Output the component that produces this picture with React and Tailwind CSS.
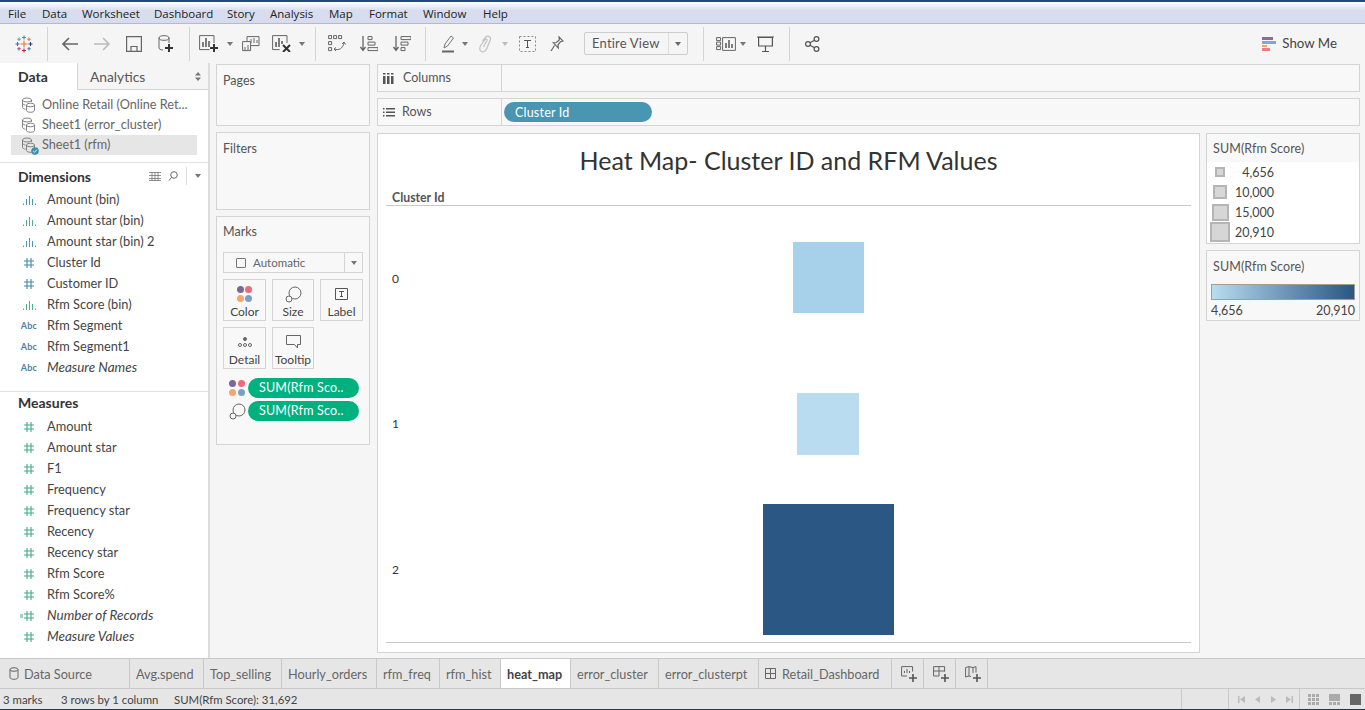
import React from "react";

const font = "font-['Lato',sans-serif]";

function Stroke({ w = 20, h = 20, children, color = "#555", sw = 1.2 }) {
  return (
    <svg width={w} height={h} viewBox={`0 0 ${w} ${h}`} fill="none" stroke={color} strokeWidth={sw}>
      {children}
    </svg>
  );
}

function Caret({ color = "#777" }) {
  return (
    <svg width="6" height="4" viewBox="0 0 6 4">
      <path d="M0 0h6L3 4z" fill={color} />
    </svg>
  );
}

function Sep({ cls }) {
  return <div className={`w-px h-[34px] bg-[#d4d4d4] shrink-0 ${cls}`} />;
}

function Slot({ cls, children }) {
  return <div className={`flex items-center justify-center shrink-0 h-full ${cls}`}>{children}</div>;
}

function Logo() {
  return (
    <svg width="18" height="18" viewBox="0 0 18 18" strokeWidth="1.100" fill="none">
      <path d="M9 5.500v7M5.500 9h7" stroke="#e8762c" />
      <path d="M9 .5v4M7 2.500h4" stroke="#59879b" />
      <path d="M9 13.500v4M7 15.500h4" stroke="#c72035" />
      <path d="M.5 9h4M2.500 7v4" stroke="#5b6591" />
      <path d="M13.500 9h4M15.500 7v4" stroke="#1f457e" />
      <path d="M4 2.500v3.500M2.300 4.200h3.500" stroke="#7199a6" />
      <path d="M14 2.500v3.500M12.300 4.200h3.500" stroke="#e8762c" />
      <path d="M4 12v3.500M2.300 13.700h3.500" stroke="#b04b7f" />
      <path d="M14 12v3.500M12.300 13.700h3.500" stroke="#4e79a7" />
    </svg>
  );
}

function Toolbar() {
  return (
    <div className="flex items-center h-[39px] shrink-0 bg-[#f5f5f5]">
      <Slot cls="w-[47px]"><Logo /></Slot>
      <Sep />
      <Slot cls="w-8 ml-[6px]">
        <Stroke w={18} h={16} color="#666" sw={1.6}><path d="M17 8H2M8 2 2 8l6 6" /></Stroke>
      </Slot>
      <Slot cls="w-8">
        <Stroke w={18} h={16} color="#bbb" sw={1.6}><path d="M1 8h15M10 2l6 6-6 6" /></Stroke>
      </Slot>
      <Slot cls="w-8">
        <Stroke w={16} h={16} color="#666"><path d="M.6.600h14.800v14.800H.6zM5 10.500h6v5H5z" /></Stroke>
      </Slot>
      <Slot cls="w-8">
        <svg width="16" height="18" viewBox="0 0 16 18" fill="none">
          <ellipse cx="6" cy="3" rx="5" ry="2.300" stroke="#666" />
          <path d="M1 3v10c0 1 1.500 2 4 2M11 3v5" stroke="#666" />
          <path d="M11 9v8M7 13h8" stroke="#333" strokeWidth="2" />
        </svg>
      </Slot>
      <Sep cls="ml-[7px]" />
      <Slot cls="w-8 ml-[3px]">
        <svg width="20" height="17" viewBox="0 0 20 17" fill="none">
          <path d="M15 8V.600H.6v14h10" stroke="#666" />
          <path d="M4 12V7M7 12V3M10 12V6" stroke="#555" strokeWidth="1.500" />
          <path d="M15 9v8M11 13h8" stroke="#333" strokeWidth="2" />
        </svg>
      </Slot>
      <Slot cls="w-[10px]"><Caret /></Slot>
      <Slot cls="w-8">
        <svg width="18" height="16" viewBox="0 0 18 16" fill="none" stroke="#666">
          <path d="M5 5V.600h12v9H9" />
          <path d="M.6 5.600h8v9h-8zM9 3v4M12 2v5M15 4v3M3 11v3M6 9v5" />
        </svg>
      </Slot>
      <Slot cls="w-[30px]">
        <svg width="20" height="17" viewBox="0 0 20 17" fill="none">
          <path d="M15 8V.600H.6v14h7" stroke="#666" />
          <path d="M4 12V7M7 12V3M10 9V6" stroke="#555" strokeWidth="1.500" />
          <path d="m11 10 7 7M18 10l-7 7" stroke="#333" strokeWidth="2" />
        </svg>
      </Slot>
      <Slot cls="w-[10px]"><Caret /></Slot>
      <Sep cls="ml-[8px]" />
      <Slot cls="w-8 ml-[5px]">
        <svg width="18" height="17" viewBox="0 0 18 17" fill="none" stroke="#666">
          <path d="M.6.600h3v3h-3zM5.600.600h3v3h-3zM10.600.600h3v3h-3zM.6 6.600h3v3h-3zM.6 12.600h3v3h-3z" />
          <path d="M6 14c5 2 9-1 10-6M14 9l2-2 1.500 2.500M6 14l2-1.500M6 14l2 2" />
        </svg>
      </Slot>
      <Slot cls="w-8">
        <svg width="18" height="16" viewBox="0 0 18 16" fill="none" stroke="#666">
          <path d="M3 0v14M.5 11 3 14.500 5.500 11" strokeWidth="1.300" />
          <path d="M8 .600h4v3H8zM8 6.100h7v3H8zM8 11.600h10v3H8z" />
        </svg>
      </Slot>
      <Slot cls="w-8 ml-px">
        <svg width="18" height="16" viewBox="0 0 18 16" fill="none" stroke="#666">
          <path d="M3 0v14M.5 11 3 14.500 5.500 11" strokeWidth="1.300" />
          <path d="M8 .600h10v3H8zM8 6.100h7v3H8zM8 11.600h4v3H8z" />
        </svg>
      </Slot>
      <Sep cls="ml-[7px]" />
      <Slot cls="w-7 ml-[8px]">
        <svg width="14" height="18" viewBox="0 0 14 18" fill="none">
          <path d="m3 13 1-4 6-8 2.500 2-6 8z" stroke="#777" />
          <path d="M1 16.500h12" stroke="#666" strokeWidth="2" />
        </svg>
      </Slot>
      <Slot cls="w-[6px]"><Caret /></Slot>
      <Slot cls="w-7 ml-[3px]">
        <Stroke w={13} h={18} color="#c4c4c4" sw={1.300}>
          <path d="M3.500 6 7 1.800c1.500-1.600 5-.2 4.500 2.400L8 13c-1 3-3.500 4.500-5.500 3.500C.5 15.500.5 13 1.500 11L6 4.500c.7-1 2.500-.3 2 1L4.500 12" />
        </Stroke>
      </Slot>
      <Slot cls="w-[6px] ml-[3px]"><Caret color="#bbb" /></Slot>
      <Slot cls="w-7 ml-[5px]">
        <svg width="17" height="16" viewBox="0 0 17 16" fill="none">
          <rect x=".5" y=".5" width="16" height="15" stroke="#888" strokeDasharray="2 2" />
          <path d="M5 4.500h7M8.500 4.500v7M7 11.500h3" stroke="#555" />
        </svg>
      </Slot>
      <Slot cls="w-7 ml-[2px]">
        <Stroke w={14} h={16} color="#666">
          <path d="M9 .8 13 5l-2.500.8-2.500 3 .3 3-5-5 3-.3 3-2.500zM4.500 9.500 1 15" />
        </Stroke>
      </Slot>
      <div className="ml-[13px] w-[104px] h-[23px] border border-[#cdcdcd] rounded-[2px] flex items-center shrink-0">
        <span className="w-[84px] pl-[7px] text-[13px] text-[#555] border-r border-[#dcdcdc] leading-[21px] tracking-[0.2px]">Entire View</span>
        <span className="flex-1 flex justify-center"><Caret color="#666" /></span>
      </div>
      <Sep cls="ml-[15px]" />
      <Slot cls="w-7 ml-[8px]">
        <svg width="20" height="14" viewBox="0 0 20 14" fill="none" stroke="#666">
          <path d="M.6.600h4v3h-4zM.6 5.100h4v3h-4zM.6 9.600h4v3h-4zM6.600.600h12.800v12.800H6.600z" />
          <path d="M10 11V6M13 11V3M16 11V7" strokeWidth="1.500" stroke="#555" />
        </svg>
      </Slot>
      <Slot cls="w-[6px]"><Caret /></Slot>
      <Slot cls="w-7 ml-[5px]">
        <Stroke w={17} h={16} color="#555">
          <path d="M0 1h17M1.600 1.500h13.800v8.500H1.600zM8.500 10v5M5 15.500h7" />
        </Stroke>
      </Slot>
      <Sep cls="ml-[10px]" />
      <Slot cls="w-7 ml-[8px]">
        <Stroke w={15} h={16} color="#555">
          <circle cx="3" cy="8" r="2.400" /><circle cx="11.500" cy="3" r="2.400" /><circle cx="11.500" cy="13" r="2.400" />
          <path d="m5 6.800 4.500-2.600M5 9.200l4.500 2.600" />
        </Stroke>
      </Slot>
      <div className="ml-auto mr-[28px] flex items-center gap-[6px]">
        <div className="flex flex-col w-[14px]">
          <div className="h-[3px] w-[11px] bg-[#8a6f94]" />
          <div className="h-[3px] w-[14px] bg-[#86a6cc] mt-px" />
          <div className="h-[2px] w-[5px] bg-[#f6a75f] mt-px" />
          <div className="h-[3px] w-[8px] bg-[#f47a85] mt-px" />
        </div>
        <span className="text-[13.300px] text-[#444]">Show Me</span>
      </div>
    </div>
  );
}

function DsIcon({ active }) {
  return (
    <div className="relative w-[16px] h-[16px] shrink-0">
      <svg width="16" height="16" viewBox="0 0 16 16" fill="none" stroke="#777" strokeWidth="0.900">
        <ellipse cx="6" cy="3" rx="4.500" ry="2" />
        <path d="M1.500 3v7c0 1 1 2 3 2.200M10.500 3v2M1.500 6.500c1 1 2 1.500 3 1.500" />
        <ellipse cx="9.500" cy="8" rx="4" ry="1.800" />
        <path d="M5.500 8v5.500c0 1 2 1.800 4 1.800s4-.8 4-1.800V8" />
      </svg>
      {active && (
        <svg className="absolute right-[-2px] bottom-[-2px]" width="8" height="8" viewBox="0 0 8 8" fill="none">
          <circle cx="4" cy="4" r="3.800" fill="#3f8fb0" />
          <path d="m2.200 4 1.300 1.300 2.300-2.500" stroke="#fff" strokeWidth="0.900" />
        </svg>
      )}
    </div>
  );
}

function FieldIcon({ kind }) {
  if (kind === "abc") return <span className="text-[9px] font-bold text-[#4e7f9e] tracking-[0.2px]">Abc</span>;
  if (kind === "bar" || kind === "barg") {
    const c = kind === "bar" ? "#4996b2" : "#4fae90";
    return (
      <svg width="14" height="10" viewBox="0 0 14 10" stroke={c} strokeWidth="1">
        <path d="M1.500 10V8.500M4.500 10V4M7.500 10V1M10.500 10V4M13.500 10V8.500" />
      </svg>
    );
  }
  const c = kind === "hash" ? "#3f8aa6" : "#3eab85";
  return (
    <svg width="18" height="10" viewBox="0 0 18 10" stroke={c} strokeWidth="1.100">
      {kind === "calc" && <path d="M0 4h3M0 6h3" />}
      <path d="M7 0v10M11 0v10M4 3h10M4 7h10" />
    </svg>
  );
}

function Field({ kind, label, italic }) {
  return (
    <div className="flex items-center h-[21px]">
      <div className="w-[47px] flex justify-center pl-[11px] shrink-0"><FieldIcon kind={kind} /></div>
      <span className={`text-[#444] ${italic ? "italic text-[13.500px]" : "text-[12.800px]"}`}>{label}</span>
    </div>
  );
}

function DataPane() {
  const dims = [
    ["bar", "Amount (bin)"], ["barg", "Amount star (bin)"], ["bar", "Amount star (bin) 2"], ["hash", "Cluster Id"],
    ["hash", "Customer ID"], ["barg", "Rfm Score (bin)"], ["abc", "Rfm Segment"], ["abc", "Rfm Segment1"], ["abc", "Measure Names", true],
  ];
  const meas = [
    ["m", "Amount"], ["m", "Amount star"], ["m", "F1"], ["m", "Frequency"], ["m", "Frequency star"], ["m", "Recency"],
    ["m", "Recency star"], ["m", "Rfm Score"], ["m", "Rfm Score%"], ["calc", "Number of Records", true], ["m", "Measure Values", true],
  ];
  return (
    <aside className="w-[210px] shrink-0 bg-white border-r-2 border-[#dcdcdc] flex flex-col">
      <div className="flex h-[27px] shrink-0">
        <div className="w-[77px] pl-[18px] text-[14px] font-bold text-[#333] leading-[27px]">Data</div>
        <div className="flex-1 bg-[#f5f5f5] border-l border-b border-[#d4d4d4] pl-[12px] pt-[1px] text-[13.800px] text-[#555] leading-[25px] flex items-center justify-between pr-[7px]">
          Analytics
          <svg width="6" height="9" viewBox="0 0 6 9"><path d="M0 3.500 3 0l3 3.500zM0 5.500 3 9l3-3.500z" fill="#777" /></svg>
        </div>
      </div>
      <div className="pt-[5px] h-[73px] border-b border-[#e2e2e2] flex flex-col shrink-0 text-[12.700px] text-[#666]">
        <div className="flex items-center h-[20px] pl-[21px] gap-[5px]"><DsIcon /><span>Online Retail (Online Ret...</span></div>
        <div className="flex items-center h-[20px] pl-[21px] gap-[5px]"><DsIcon /><span>Sheet1 (error_cluster)</span></div>
        <div className="flex items-center h-[20px] mx-[11px] pl-[10px] gap-[5px] bg-[#e6e6e6]"><DsIcon active /><span>Sheet1 (rfm)</span></div>
      </div>
      <div className="flex items-center h-[26px] pl-[18px] pr-[7px] shrink-0">
        <span className="text-[14px] font-bold text-[#333]">Dimensions</span>
        <div className="ml-auto flex items-center">
          <svg width="12" height="9" viewBox="0 0 12 9" stroke="#777"><path d="M0 .500h12M0 3.500h12M0 6.500h12M0 8.500h12M3 0v9M6 0v9M9 0v9" strokeWidth="0.800" /></svg>
          <svg className="ml-[7px]" width="10" height="10" viewBox="0 0 10 10" fill="none" stroke="#666"><circle cx="6" cy="4" r="3.300" /><path d="M3.500 6.500 1 9.500" /></svg>
          <div className="w-px h-[18px] bg-[#ddd] mx-[8px]" />
          <Caret />
        </div>
      </div>
      <div className="flex flex-col">
        {dims.map((f) => <Field key={f[1]} kind={f[0]} label={f[1]} italic={f[2]} />)}
      </div>
      <div className="mt-[13px] border-t border-[#e2e2e2] pl-[18px] text-[14px] font-bold text-[#333] h-[24px] leading-[22px] shrink-0">Measures</div>
      <div className="flex flex-col mt-[1px]">
        {meas.map((f) => <Field key={f[1]} kind={f[0]} label={f[1]} italic={f[2]} />)}
      </div>
    </aside>
  );
}

function ColorDots() {
  return (
    <div className="grid grid-cols-2 gap-[1.500px] w-[16px]">
      <span className="w-[7px] h-[7px] rounded-full bg-[#7b6792]" />
      <span className="w-[7px] h-[7px] rounded-full bg-[#ef6a78]" />
      <span className="w-[7px] h-[7px] rounded-full bg-[#f3a66d]" />
      <span className="w-[7px] h-[7px] rounded-full bg-[#7a9fcb]" />
    </div>
  );
}

function SizeGlyph() {
  return (
    <svg width="17" height="17" viewBox="0 0 17 17" fill="none" stroke="#666" strokeWidth="1">
      <circle cx="10" cy="7" r="6" />
      <circle cx="4" cy="13" r="3" fill="#f8f8f8" />
    </svg>
  );
}

function MarkCard({ label, children }) {
  return (
    <div className="h-[42px] border border-[#d4d4d4] flex flex-col items-center justify-between pt-[5px] pb-[1px] text-[12px] text-[#444]">
      <div className="h-[18px] flex items-center">{children}</div>
      <span className="leading-[15px]">{label}</span>
    </div>
  );
}

function MarksColumn() {
  return (
    <div className="w-[160px] shrink-0 pl-[6px] flex flex-col">
      <div className="mt-px h-[62px] bg-[#f8f8f8] border border-[#d4d4d4] pl-[6px] pt-[7px] text-[12.500px] text-[#555]">Pages</div>
      <div className="mt-[6px] h-[78px] bg-[#f8f8f8] border border-[#d4d4d4] pl-[6px] pt-[7px] text-[12.500px] text-[#555]">Filters</div>
      <div className="mt-[6px] h-[229px] bg-[#f8f8f8] border border-[#d4d4d4] px-[6px] pt-[6px] flex flex-col">
        <div className="text-[12.500px] text-[#555] leading-[18px]">Marks</div>
        <div className="mt-[11px] h-[21px] border border-[#d4d4d4] flex items-center text-[11.500px] text-[#666]">
          <span className="w-[10px] h-[10px] border border-[#777] rounded-[1px] ml-[12px] mr-[7px]" />
          <span className="flex-1">Automatic</span>
          <span className="w-[18px] h-full border-l border-[#d4d4d4] flex items-center justify-center"><Caret /></span>
        </div>
        <div className="grid grid-cols-[43px_42px_43px] gap-[6px] mt-[6px]">
          <MarkCard label="Color"><ColorDots /></MarkCard>
          <MarkCard label="Size"><SizeGlyph /></MarkCard>
          <MarkCard label="Label">
            <svg width="13" height="12" viewBox="0 0 13 12" fill="none" stroke="#555"><path d="M.5.500h12v11H.5zM4 3.500h5M6.500 3.500v5M5 8.500h3" /></svg>
          </MarkCard>
          <MarkCard label="Detail">
            <svg width="14" height="12" viewBox="0 0 14 12" fill="none" stroke="#666"><circle cx="7" cy="3" r="1.500" fill="#666" /><circle cx="2" cy="9" r="1.500" /><circle cx="7" cy="9" r="1.500" /><circle cx="12" cy="9" r="1.500" /></svg>
          </MarkCard>
          <MarkCard label="Tooltip">
            <svg width="15" height="14" viewBox="0 0 15 14" fill="none" stroke="#666"><path d="M.5.500h14v9h-3v3.500l-3-3.500H.5z" /></svg>
          </MarkCard>
        </div>
        <div className="flex flex-col gap-[3px] mt-[9px]">
          <div className="flex items-center">
            <div className="w-[25px] pl-[6px] shrink-0"><ColorDots /></div>
            <div className="w-[111px] h-[20px] rounded-full bg-[#00b180] text-white text-[12.500px] pl-[11px] leading-[19px] tracking-[0.2px]">SUM(Rfm Sco..</div>
          </div>
          <div className="flex items-center">
            <div className="w-[25px] pl-[6px] shrink-0"><SizeGlyph /></div>
            <div className="w-[111px] h-[20px] rounded-full bg-[#00b180] text-white text-[12.500px] pl-[11px] leading-[19px] tracking-[0.2px]">SUM(Rfm Sco..</div>
          </div>
        </div>
      </div>
    </div>
  );
}

function Shelf({ icon, label, children, textCls }) {
  return (
    <div className="h-[28px] bg-[#f8f8f8] border border-[#d4d4d4] flex items-center">
      <div className="w-[124px] h-full pl-[5px] flex items-center gap-[7px] border-r border-[#d4d4d4] text-[12.500px] text-[#555] shrink-0">
        {icon}<span className={textCls}>{label}</span>
      </div>
      {children}
    </div>
  );
}

function HeatRow({ label, sizeCls, colorCls }) {
  return (
    <div className="flex items-center">
      <div className="w-[80px] pl-[6px] pt-px text-[12px] text-[#333] shrink-0">{label}</div>
      <div className="flex-1 flex items-center justify-center">
        <div className={`${sizeCls} ${colorCls}`} />
      </div>
    </div>
  );
}

function ViewCard() {
  return (
    <div className="flex-1 h-[520px] bg-white border border-[#d4d4d4] flex flex-col px-[8px]">
      <h1 className="text-center text-[25px] text-[#333] leading-[30px] mt-[11px]">Heat Map- Cluster ID and RFM Values</h1>
      <div className="mt-[14px] h-[17px] pt-px border-b border-[#c8c8c8] pl-[6px] text-[12.300px] font-bold text-[#555] leading-[15px]">Cluster Id</div>
      <div className="h-[436px] grid grid-rows-3">
        <HeatRow label="0" sizeCls="w-[71px] h-[71px] mb-[2px]" colorCls="bg-[#a7d0eb]" />
        <HeatRow label="1" sizeCls="w-[62px] h-[62px] mr-px" colorCls="bg-[#b9dcf1]" />
        <HeatRow label="2" sizeCls="w-[131px] h-[131px]" colorCls="bg-[#2a5783]" />
      </div>
      <div className="border-t border-[#c8c8c8]" />
    </div>
  );
}

function Legends() {
  const sizes = [
    ["w-[10px] h-[10px]", "4,656"], ["w-[14px] h-[14px]", "10,000"], ["w-[17px] h-[17px]", "15,000"], ["w-[20px] h-[20px]", "20,910"],
  ];
  return (
    <div className="w-[154px] ml-[6px] shrink-0 flex flex-col gap-[6px]">
      <div className="h-[111px] bg-white border border-[#d4d4d4]">
        <div className="h-[28px] bg-[#f8f8f8] pl-[6px] pt-[2px] text-[12.500px] text-[#555] leading-[26px] tracking-[0.1px]">SUM(Rfm Score)</div>
        {sizes.map(([cls, label]) => (
          <div key={label} className="flex items-center h-[20px]">
            <div className="w-[26px] flex justify-center shrink-0"><span className={`${cls} bg-[#d6d6d6] border-2 border-[#b5b5b5]`} /></div>
            <span className="w-[41px] text-right text-[12.500px] text-[#444] pt-[2px]">{label}</span>
          </div>
        ))}
      </div>
      <div className="h-[71px] bg-[#f8f8f8] border border-[#d4d4d4]">
        <div className="h-[28px] pl-[6px] pt-[3px] text-[12.500px] text-[#555] leading-[26px] tracking-[0.1px]">SUM(Rfm Score)</div>
        <div className="mx-[4px] mt-[5px] h-[16px] border border-[#a39e92] bg-gradient-to-r from-[#b9ddf1] to-[#2a5783]" />
        <div className="mx-[4px] pt-[2px] flex justify-between text-[12.500px] text-[#444] leading-[18px]">
          <span>4,656</span><span>20,910</span>
        </div>
      </div>
    </div>
  );
}

function Tab({ w, label, active, children }) {
  return (
    <div className={`${w} h-full shrink-0 flex items-center gap-[6px] border-r border-[#c8c8c8] text-[12.700px] ${label ? "pl-[6px]" : "pl-[9px]"} ${active ? "bg-white font-bold text-[#444]" : "text-[#666]"}`}>
      {children}{label && <span className="pt-[2px]">{label}</span>}
    </div>
  );
}

function AddIcon({ children }) {
  return (
    <svg width="17" height="16" viewBox="0 0 17 16" fill="none" stroke="#666">
      {children}
      <path d="M12 8v8M8 12h8" stroke="#555" strokeWidth="1.600" />
    </svg>
  );
}

function Tabs() {
  return (
    <div className="h-[31px] bg-[#e6e6e6] border-t border-b border-[#c8c8c8] flex shrink-0">
      <div className="w-[130px] h-full shrink-0 flex items-center pl-[9px] gap-[5px] border-r border-[#c8c8c8] text-[12.700px] text-[#666]">
        <svg width="10" height="13" viewBox="0 0 10 13" fill="none" stroke="#666"><ellipse cx="5" cy="2.500" rx="4" ry="1.800" /><path d="M1 2.500v8c0 1 2 1.800 4 1.800s4-.8 4-1.800v-8" /></svg>
        <span className="pt-[2px]">Data Source</span>
      </div>
      <Tab w="w-[74px]" label="Avg.spend" />
      <Tab w="w-[78px]" label="Top_selling" />
      <Tab w="w-[95px]" label="Hourly_orders" />
      <Tab w="w-[63px]" label="rfm_freq" />
      <Tab w="w-[61px]" label="rfm_hist" />
      <Tab w="w-[70px]" label="heat_map" active />
      <Tab w="w-[88px]" label="error_cluster" />
      <Tab w="w-[100px]" label="error_clusterpt" />
      <Tab w="w-[133px]" label="Retail_Dashboard">
        <svg width="11" height="11" viewBox="0 0 11 11" fill="none" stroke="#666"><path d="M.5.500h10v10H.5zM5.500.500v10M.5 5.500h10" /></svg>
      </Tab>
      <Tab w="w-[32px]"><AddIcon><path d="M6 10H.6V.600h11v5M3.500 7V5M6 7V3M8.500 7V5" /></AddIcon></Tab>
      <Tab w="w-[32px]"><AddIcon><path d="M6 10H.6V.600h11v5M6 .600V10M.6 5h11" /></AddIcon></Tab>
      <Tab w="w-[32px]"><AddIcon><path d="M.6 1.500 4 .600l4 1 3-1v6M.6 1.500V11L4 10l2 .5M4 .600V10M8 1.600V7" /></AddIcon></Tab>
    </div>
  );
}

function StatusBar() {
  return (
    <div className="h-[20px] bg-[#e6e6e6] flex items-center text-[11.400px] text-[#444] shrink-0">
      <span className="w-[61px] pl-[3px] pt-[2px] shrink-0">3 marks</span>
      <span className="w-[113px] pt-[2px] shrink-0">3 rows by 1 column</span>
      <span className="w-[1007px] pt-[2px] shrink-0">SUM(Rfm Score): 31,692</span>
      <div className="w-[47px] h-full border-l border-[#c8c8c8]" />
      <div className="w-[71px] h-full border-l border-[#c8c8c8] flex items-center justify-between pl-[9px] pr-[6px]">
        <svg width="7" height="7" viewBox="0 0 7 7" fill="#bbb"><path d="M0 0h1.500v7H0zM7 0v7L2 3.500z" /></svg>
        <svg width="5" height="7" viewBox="0 0 5 7" fill="#bbb"><path d="M5 0v7L0 3.500z" /></svg>
        <svg width="5" height="7" viewBox="0 0 5 7" fill="#bbb"><path d="M0 0v7l5-3.500z" /></svg>
        <svg width="7" height="7" viewBox="0 0 7 7" fill="#bbb"><path d="M0 0v7l5-3.500zM5.500 0H7v7H5.500z" /></svg>
      </div>
      <div className="flex-1 h-full border-l border-[#c8c8c8] flex items-center pl-[8px] gap-[10px]">
        <svg width="11" height="11" viewBox="0 0 11 11" fill="#aaa"><path d="M0 0h3v3H0zM4 0h3v3H4zM8 0h3v3H8zM0 4h3v3H0zM4 4h3v3H4zM8 4h3v3H8zM0 8h3v3H0zM4 8h3v3H4zM8 8h3v3H8z" /></svg>
        <svg width="11" height="11" viewBox="0 0 11 11" fill="#aaa"><path d="M0 0h11v7H0zM0 8h3v3H0zM4 8h3v3H4zM8 8h3v3H8z" /></svg>
        <span className="w-[11px] h-[11px] bg-[#666]" />
      </div>
    </div>
  );
}

export default function App() {
  return (
    <div className={`w-[1365px] h-[710px] overflow-hidden flex flex-col bg-[#f5f5f5] ${font}`}>
      {/* window title edge + menu */}
      <div className="h-[24px] shrink-0 border-t-2 border-[#24487c] border-b border-b-[#b6bac8] bg-gradient-to-b from-white via-[#d8deef] via-40% to-[#d6dcee] flex items-end pb-[1px] pl-[8px] text-[11.500px] text-[#222] font-['Open_Sans',sans-serif]">
        <span className="leading-[17px] w-[34px]">File</span>
        <span className="leading-[17px] w-[40px]">Data</span>
        <span className="leading-[17px] w-[72px]">Worksheet</span>
        <span className="leading-[17px] w-[73px]">Dashboard</span>
        <span className="leading-[17px] w-[43px]">Story</span>
        <span className="leading-[17px] w-[59px]">Analysis</span>
        <span className="leading-[17px] w-[40px]">Map</span>
        <span className="leading-[17px] w-[54px]">Format</span>
        <span className="leading-[17px] w-[60px]">Window</span>
        <span className="leading-[17px]">Help</span>
      </div>
      <Toolbar />
      <div className="flex h-[595px] shrink-0">
        <DataPane />
        <MarksColumn />
        <div className="flex-1 pl-[7px] pr-[5px] flex flex-col pt-px">
          <Shelf
            label="Columns"
            icon={<svg width="13" height="11" viewBox="0 0 13 11" fill="#555"><path d="M0 3h2.500v8H0zM4 3h2.500v8H4zM8 3h2.500v8H8zM0 0h2.500v1.500H0zM4 0h2.500v1.500H4zM8 0h2.500v1.500H8z" /></svg>}
          />
          <div className="h-[6px] shrink-0" />
          <Shelf
            label="Rows"
            textCls="pt-px"
            icon={<svg width="12" height="9" viewBox="0 0 12 9" fill="#555"><path d="M3 0h9v1.500H3zM3 3.500h9V5H3zM3 7h9v1.500H3zM0 0h1.500v1.500H0zM0 3.500h1.500V5H0zM0 7h1.500v1.500H0z" /></svg>}
          >
            <div className="ml-[2px] w-[148px] h-[20px] rounded-full bg-[#4996b2] text-white text-[12.500px] pl-[11px] pt-px leading-[19px] tracking-[0.2px]">Cluster Id</div>
          </Shelf>
          <div className="flex mt-[7px]">
            <ViewCard />
            <Legends />
          </div>
        </div>
      </div>
      <Tabs />
      <StatusBar />
      <div className="h-[1px] bg-[#22384f] shrink-0" />
    </div>
  );
}
